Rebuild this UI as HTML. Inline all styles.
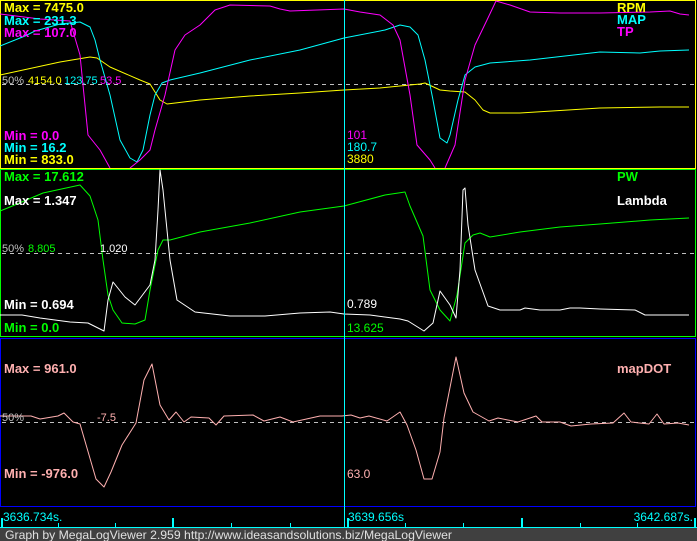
<!DOCTYPE html>
<html><head><meta charset="utf-8"><style>
html,body{margin:0;padding:0;background:#000;width:697px;height:541px;overflow:hidden}
svg{display:block}
text{font-family:"Liberation Sans",Arial,sans-serif}
.b{font-weight:bold;font-size:13px}
.n{font-size:11px}
</style></head><body>
<svg width="697" height="541" viewBox="0 0 697 541" xmlns="http://www.w3.org/2000/svg">
<rect width="697" height="541" fill="#000"/>
<rect x="0.5" y="0.5" width="695" height="168" fill="none" stroke="#ffff00" shape-rendering="crispEdges"/>
<rect x="0.5" y="169.5" width="695" height="167" fill="none" stroke="#00ff00" shape-rendering="crispEdges"/>
<rect x="0.5" y="338.5" width="695" height="168" fill="none" stroke="#0000ff" shape-rendering="crispEdges"/>
<g stroke="#c0c0c0" stroke-dasharray="4,4" shape-rendering="crispEdges">
<line x1="2" y1="84.5" x2="695" y2="84.5"/>
<line x1="2" y1="253.5" x2="695" y2="253.5"/>
<line x1="2" y1="422.5" x2="695" y2="422.5"/>
</g>
<g fill="none" stroke-width="1" stroke-linejoin="round">
<polyline stroke="#ffff00" points="0,75 60,62 90,57 97,58 110,67 140,80 150,84 155,92 160,100 167,104 200,100 250,96 300,93 344,90 380,88 420,84 425,83 440,90 450,91 465,92 475,100 483,110 490,113 520,113 600,108 660,107 689,107"/>
<polyline stroke="#00ffff" points="0,46 25,36 35,31 60,24 80,22 90,27 95,40 100,60 110,95 120,140 130,158 137,162 143,150 150,115 155,95 162,83 170,80 200,73 250,60 300,50 344,38 385,30 400,25 410,27 418,35 425,60 433,100 440,138 447,143 450,135 458,100 465,75 475,67 490,63 530,60 600,52 640,53 660,51 689,50"/>
<polyline stroke="#ff00ff" points="0,14 40,19 70,21 75,38 80,55 88,135 100,150 110,168"/>
<polyline stroke="#ff00ff" points="130,168 140,160 150,150 155,130 165,95 175,50 185,35 200,25 215,10 230,5 270,6 280,9 290,11 344,9 360,12 380,15 393,25 400,40 410,95 417,145 430,160 435,168"/>
<polyline stroke="#ff00ff" points="445,168 455,145 465,80 475,45 487,20 496,1 510,5 530,12 560,13 600,13 650,12 670,11 680,14 689,15"/>
<polyline stroke="#00ff00" points="0,211 10,207 43,193 80,185 90,196 98,220 103,260 108,295 113,310 122,323 135,324 145,320 150,290 158,250 163,240 170,240 200,232 250,223 300,212 344,206 385,195 405,192 410,206 423,236 430,290 440,310 450,321 457,295 465,243 473,235 480,233 490,237 520,232 560,227 600,224 650,220 689,218"/>
<polyline stroke="#ffffff" points="0,315 22,315 40,318 70,322 88,323 104,331 108,300 113,282 125,297 135,305 150,285 155,260 158,210 160,170 163,190 170,260 177,300 195,312 230,316 265,316 300,313 330,312 344,314 370,315 400,319 408,321 424,331 433,323 440,291 450,305 456,318 460,270 463,190 465,188 468,225 475,270 488,306 500,310 520,310 525,308 540,310 560,310 570,308 580,308 600,309 635,310 645,315 660,315 689,315"/>
<polyline stroke="#ffb0b0" points="0,416 31,416 40,419 58,416 64,413 73,422 80,424 96,479 104,487 111,472 122,445 136,423 144,380 152,364 160,405 169,420 176,412 184,422 191,417 209,418 216,425 224,416 253,415 264,421 280,417 293,422 320,416 342,416 351,415 360,418 369,416 387,421 400,412 407,425 416,450 424,479 432,479 440,452 444,418 456,357 464,393 473,412 489,421 498,418 518,422 536,416 542,422 560,422 571,426 591,424 613,423 624,413 631,422 649,424 657,414 664,424 678,423 689,425"/>
</g>
<line x1="344.5" y1="0" x2="344.5" y2="528" stroke="#00ffff" shape-rendering="crispEdges"/>
<text x="4" y="12" class="b" fill="#ffff00">Max = 7475.0</text>
<text x="4" y="25" class="b" fill="#00ffff">Max = 231.3</text>
<text x="4" y="37" class="b" fill="#ff00ff">Max = 107.0</text>
<text x="4" y="140" class="b" fill="#ff00ff">Min = 0.0</text>
<text x="4" y="152" class="b" fill="#00ffff">Min = 16.2</text>
<text x="4" y="164" class="b" fill="#ffff00">Min = 833.0</text>
<text x="2" y="84" class="n" fill="#c0c0c0">50%</text>
<text x="28" y="84" class="n" fill="#ffff00">4154.0</text>
<text x="64" y="84" class="n" fill="#00ffff">123.75</text>
<text x="100" y="84" class="n" fill="#ff00ff">53.5</text>
<text x="617" y="12" class="b" fill="#ffff00">RPM</text>
<text x="617" y="24" class="b" fill="#00ffff">MAP</text>
<text x="617" y="36" class="b" fill="#ff00ff">TP</text>
<text x="347" y="139" font-size="12" fill="#ff00ff">101</text>
<text x="347" y="151" font-size="12" fill="#00ffff">180.7</text>
<text x="347" y="163" font-size="12" fill="#ffff00">3880</text>
<text x="4" y="181" class="b" fill="#00ff00">Max = 17.612</text>
<text x="4" y="205" class="b" fill="#ffffff">Max = 1.347</text>
<text x="2" y="252" class="n" fill="#c0c0c0">50%</text>
<text x="28" y="252" class="n" fill="#00ff00">8.805</text>
<text x="100" y="252" class="n" fill="#ffffff">1.020</text>
<text x="4" y="309" class="b" fill="#ffffff">Min = 0.694</text>
<text x="4" y="332" class="b" fill="#00ff00">Min = 0.0</text>
<text x="617" y="181" class="b" fill="#00ff00">PW</text>
<text x="617" y="205" class="b" fill="#ffffff">Lambda</text>
<text x="347" y="308" font-size="12" fill="#ffffff">0.789</text>
<text x="347" y="332" font-size="12" fill="#00ff00">13.625</text>
<text x="4" y="373" class="b" fill="#ffb0b0">Max = 961.0</text>
<text x="617" y="373" class="b" fill="#ffb0b0">mapDOT</text>
<text x="2" y="421" class="n" fill="#c0c0c0">50%</text>
<text x="97" y="421" class="n" fill="#ffb0b0">-7.5</text>
<text x="4" y="478" class="b" fill="#ffb0b0">Min = -976.0</text>
<text x="347" y="478" font-size="12" fill="#ffb0b0">63.0</text>
<g fill="#00ffff" font-size="12">
<text x="3" y="521">3636.734s.</text>
<text x="348" y="521">3639.656s</text>
<text x="693" y="521" text-anchor="end">3642.687s.</text>
</g>
<g stroke="#00ffff" shape-rendering="crispEdges">
<line x1="0" y1="527.5" x2="697" y2="527.5"/>
<line x1="2" y1="518" x2="2" y2="528" stroke-width="2"/>
<line x1="173" y1="518" x2="173" y2="528" stroke-width="2"/>
<line x1="348" y1="518" x2="348" y2="528" stroke-width="2"/>
<line x1="522" y1="518" x2="522" y2="528" stroke-width="2"/>
<line x1="695" y1="518" x2="695" y2="528" stroke-width="2"/>
<line x1="58.5" y1="523" x2="58.5" y2="528"/>
<line x1="115.5" y1="523" x2="115.5" y2="528"/>
<line x1="231.5" y1="523" x2="231.5" y2="528"/>
<line x1="290.5" y1="523" x2="290.5" y2="528"/>
<line x1="405.5" y1="523" x2="405.5" y2="528"/>
<line x1="463.5" y1="523" x2="463.5" y2="528"/>
<line x1="580.5" y1="523" x2="580.5" y2="528"/>
<line x1="637.5" y1="523" x2="637.5" y2="528"/>
</g>
<rect x="0" y="528" width="697" height="13" fill="#404040"/>
<text x="5" y="539" font-size="12" fill="#e0e0e0" textLength="447" lengthAdjust="spacingAndGlyphs">Graph by MegaLogViewer 2.959 http://www.ideasandsolutions.biz/MegaLogViewer</text>
</svg>
</body></html>
